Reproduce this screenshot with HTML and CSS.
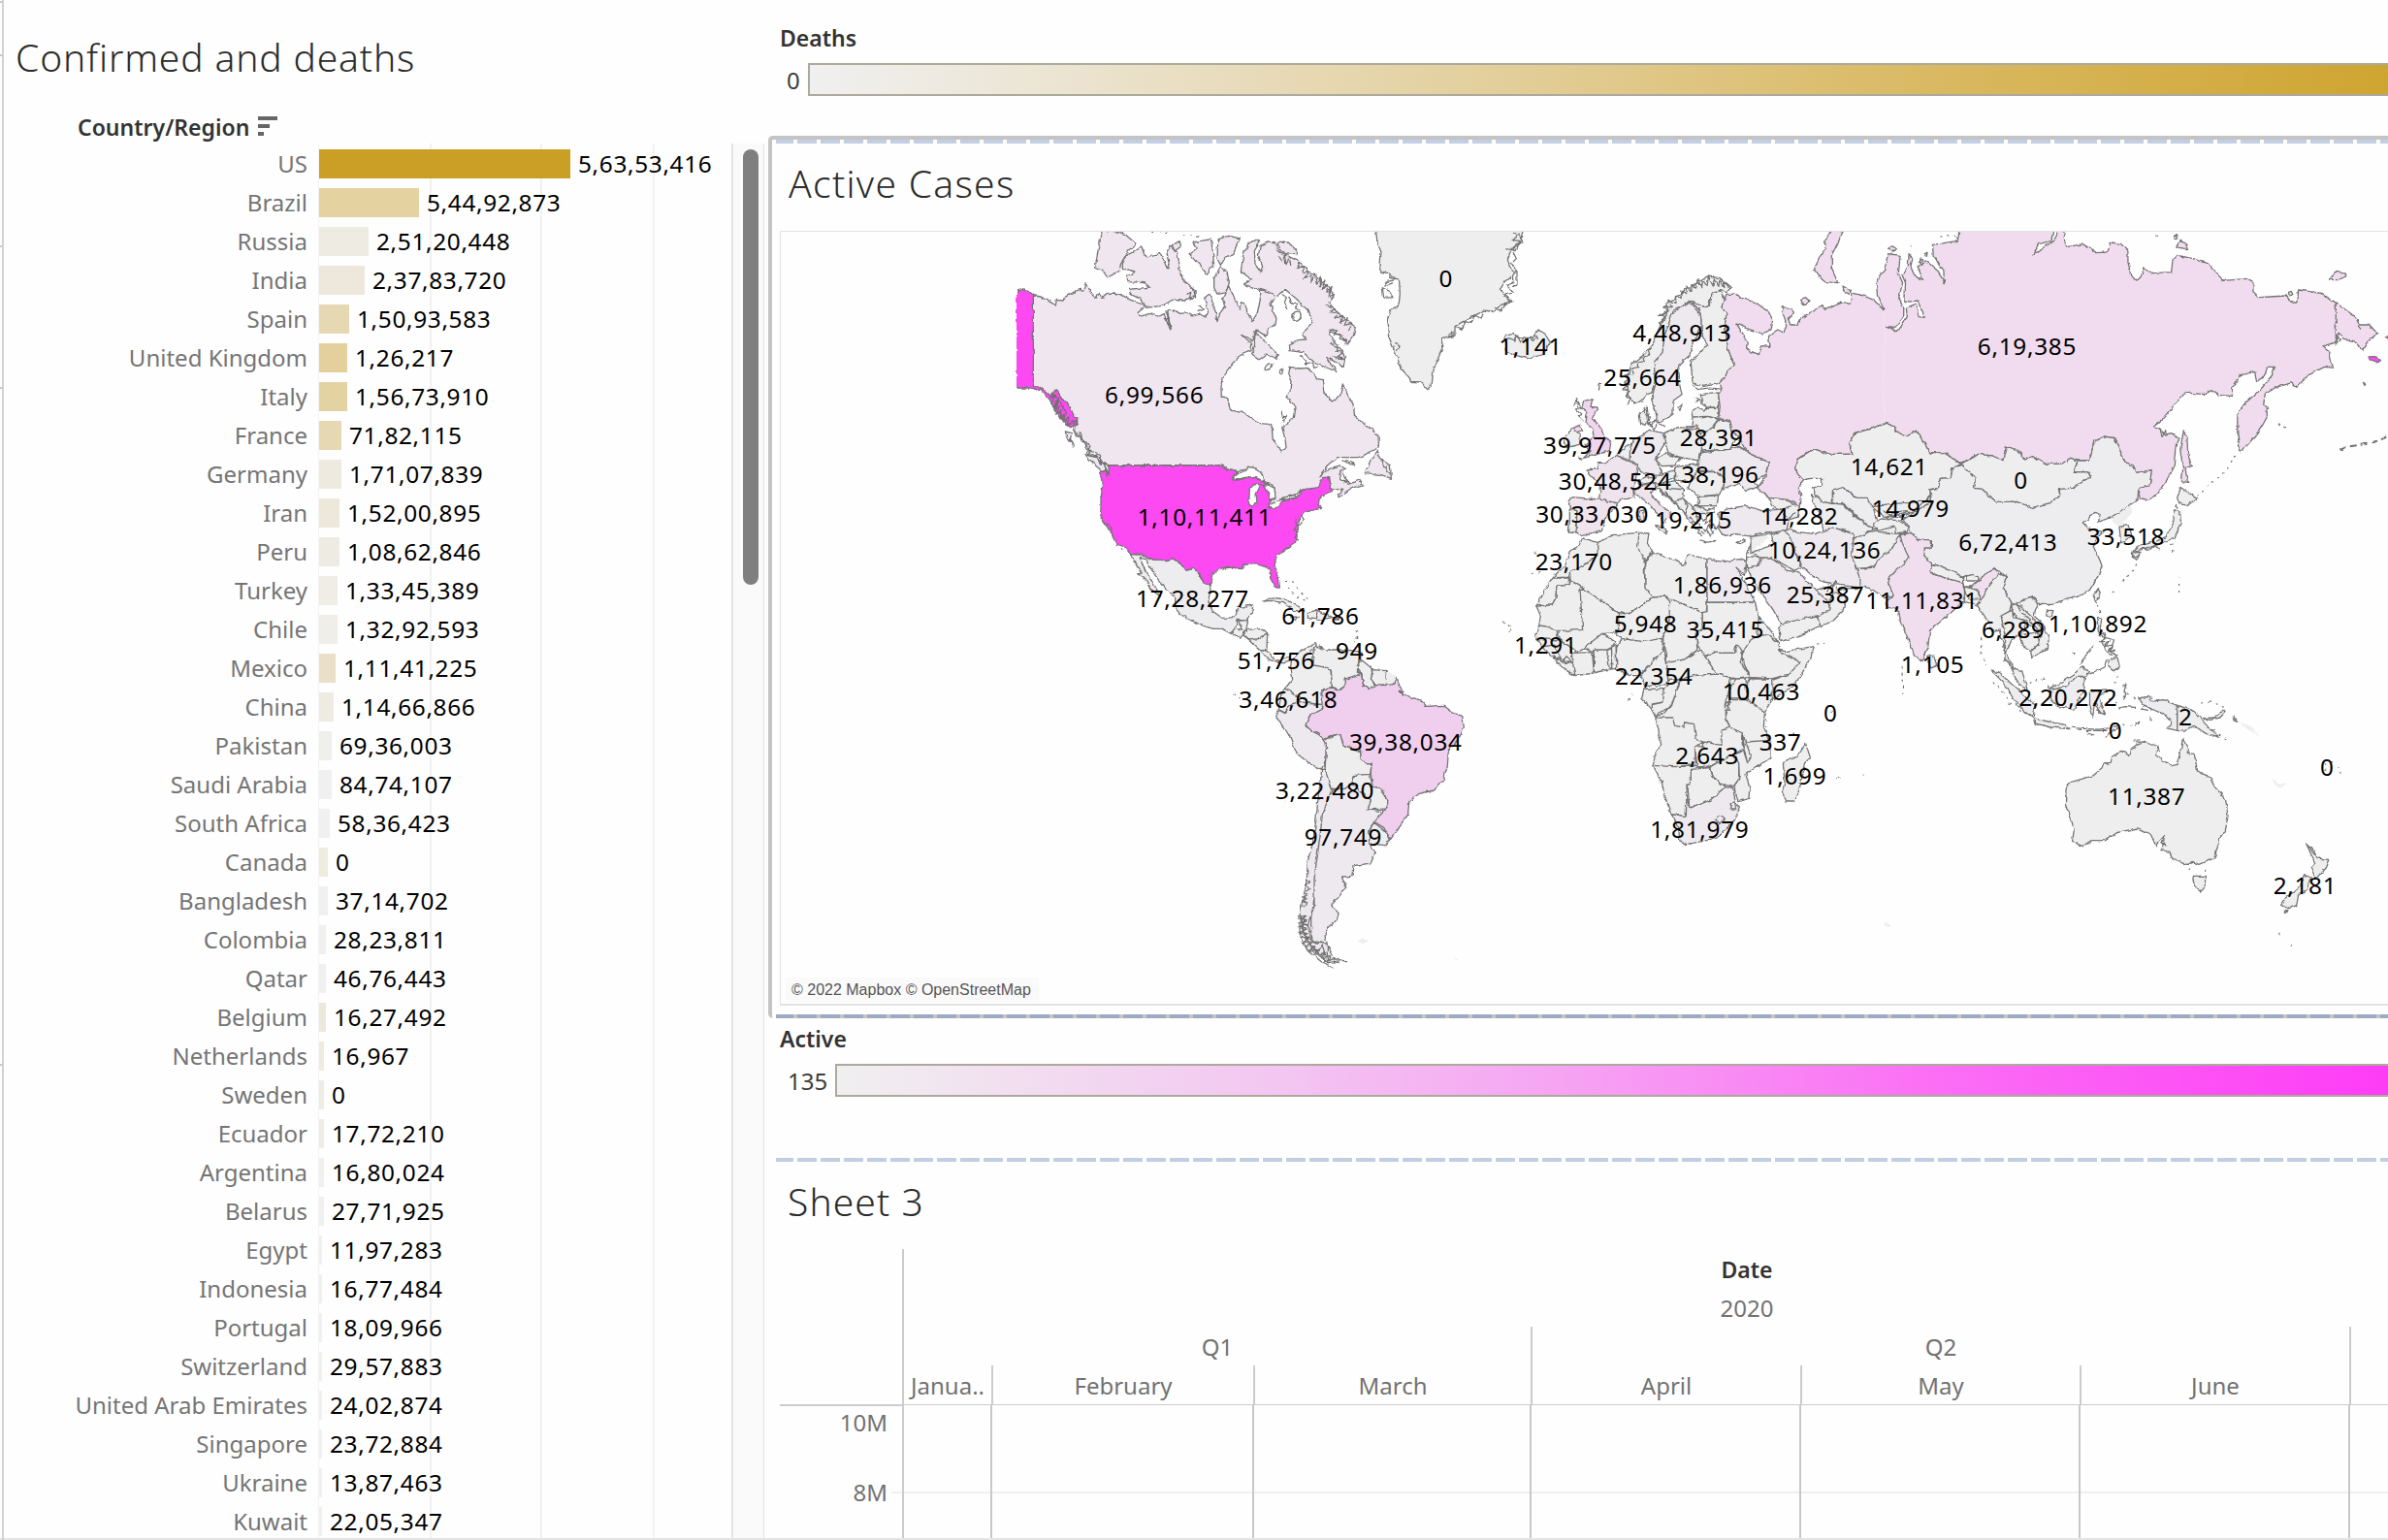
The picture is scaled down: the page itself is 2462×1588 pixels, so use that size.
FILE: index.html
```html
<!DOCTYPE html>
<html lang="en">
<head>
<meta charset="utf-8">
<title>Confirmed and deaths</title>
<link rel="stylesheet" href="styles.css">
</head>
<body>
<main class="dashboard">
  <section class="sheet-bars">
    <div class="edge"><i></i><i></i><i></i><i></i><i></i></div>
    <div class="bars-body">
      <h1 class="title">Confirmed and deaths</h1>
      <div class="field-head"><span>Country/Region</span>
        <svg class="sort" width="20" height="20" viewBox="0 0 20 20"><path d="M0 0h20v4H0zM0 8h12v4H0zM0 16h6v4H0z"/></svg>
      </div>
      <div class="bars-scroll">
        <div class="rows">
          <div class="row"><span class="name">US</span><b class="bar" style="width:259px;background:#cb9f25"></b><span class="val">5,63,53,416</span></div>
          <div class="row"><span class="name">Brazil</span><b class="bar" style="width:103px;background:#e4d2a1"></b><span class="val">5,44,92,873</span></div>
          <div class="row"><span class="name">Russia</span><b class="bar" style="width:51px;background:#eeebe3"></b><span class="val">2,51,20,448</span></div>
          <div class="row"><span class="name">India</span><b class="bar" style="width:47px;background:#eee7db"></b><span class="val">2,37,83,720</span></div>
          <div class="row"><span class="name">Spain</span><b class="bar" style="width:31px;background:#e6d8b3"></b><span class="val">1,50,93,583</span></div>
          <div class="row"><span class="name">United Kingdom</span><b class="bar" style="width:29px;background:#e3d09c"></b><span class="val">1,26,217</span></div>
          <div class="row"><span class="name">Italy</span><b class="bar" style="width:29px;background:#e4d3a2"></b><span class="val">1,56,73,910</span></div>
          <div class="row"><span class="name">France</span><b class="bar" style="width:23px;background:#e6d8b3"></b><span class="val">71,82,115</span></div>
          <div class="row"><span class="name">Germany</span><b class="bar" style="width:23px;background:#eeeae0"></b><span class="val">1,71,07,839</span></div>
          <div class="row"><span class="name">Iran</span><b class="bar" style="width:21px;background:#eee8da"></b><span class="val">1,52,00,895</span></div>
          <div class="row"><span class="name">Peru</span><b class="bar" style="width:21px;background:#eeebe3"></b><span class="val">1,08,62,846</span></div>
          <div class="row"><span class="name">Turkey</span><b class="bar" style="width:19px;background:#efede5"></b><span class="val">1,33,45,389</span></div>
          <div class="row"><span class="name">Chile</span><b class="bar" style="width:19px;background:#efeee9"></b><span class="val">1,32,92,593</span></div>
          <div class="row"><span class="name">Mexico</span><b class="bar" style="width:17px;background:#eae0ca"></b><span class="val">1,11,41,225</span></div>
          <div class="row"><span class="name">China</span><b class="bar" style="width:15px;background:#eeebe3"></b><span class="val">1,14,66,866</span></div>
          <div class="row"><span class="name">Pakistan</span><b class="bar" style="width:13px;background:#efefec"></b><span class="val">69,36,003</span></div>
          <div class="row"><span class="name">Saudi Arabia</span><b class="bar" style="width:13px;background:#f0f0f0"></b><span class="val">84,74,107</span></div>
          <div class="row"><span class="name">South Africa</span><b class="bar" style="width:11px;background:#f0f0f0"></b><span class="val">58,36,423</span></div>
          <div class="row"><span class="name">Canada</span><b class="bar" style="width:9px;background:#eeebdf"></b><span class="val">0</span></div>
          <div class="row"><span class="name">Bangladesh</span><b class="bar" style="width:9px;background:#f0f0f0"></b><span class="val">37,14,702</span></div>
          <div class="row"><span class="name">Colombia</span><b class="bar" style="width:7px;background:#f0f0ee"></b><span class="val">28,23,811</span></div>
          <div class="row"><span class="name">Qatar</span><b class="bar" style="width:7px;background:#f0f0f0"></b><span class="val">46,76,443</span></div>
          <div class="row"><span class="name">Belgium</span><b class="bar" style="width:7px;background:#ede9da"></b><span class="val">16,27,492</span></div>
          <div class="row"><span class="name">Netherlands</span><b class="bar" style="width:5px;background:#eeebdf"></b><span class="val">16,967</span></div>
          <div class="row"><span class="name">Sweden</span><b class="bar" style="width:5px;background:#eeece4"></b><span class="val">0</span></div>
          <div class="row"><span class="name">Ecuador</span><b class="bar" style="width:5px;background:#eeece4"></b><span class="val">17,72,210</span></div>
          <div class="row"><span class="name">Argentina</span><b class="bar" style="width:5px;background:#f0f0f0"></b><span class="val">16,80,024</span></div>
          <div class="row"><span class="name">Belarus</span><b class="bar" style="width:5px;background:#f0f0f0"></b><span class="val">27,71,925</span></div>
          <div class="row"><span class="name">Egypt</span><b class="bar" style="width:3px;background:#f0f0ec"></b><span class="val">11,97,283</span></div>
          <div class="row"><span class="name">Indonesia</span><b class="bar" style="width:3px;background:#f0f0ec"></b><span class="val">16,77,484</span></div>
          <div class="row"><span class="name">Portugal</span><b class="bar" style="width:3px;background:#f0f0f0"></b><span class="val">18,09,966</span></div>
          <div class="row"><span class="name">Switzerland</span><b class="bar" style="width:3px;background:#f0f0ec"></b><span class="val">29,57,883</span></div>
          <div class="row"><span class="name">United Arab Emirates</span><b class="bar" style="width:3px;background:#f0f0f0"></b><span class="val">24,02,874</span></div>
          <div class="row"><span class="name">Singapore</span><b class="bar" style="width:3px;background:#f0f0f0"></b><span class="val">23,72,884</span></div>
          <div class="row"><span class="name">Ukraine</span><b class="bar" style="width:3px;background:#f0f0f0"></b><span class="val">13,87,463</span></div>
          <div class="row"><span class="name">Kuwait</span><b class="bar" style="width:3px;background:#f0f0f0"></b><span class="val">22,05,347</span></div>
        </div>
        <div class="scrollbar"><div class="thumb"></div></div>
      </div>
    </div>
  </section>

  <div class="right">
    <section class="legend legend-deaths">
      <h3>Deaths</h3>
      <div class="ramp-row"><span>0</span><div class="ramp gold"></div></div>
    </section>

    <section class="sheet-map">
      <div class="dashes"></div>
      <h2 class="title">Active Cases</h2>
      <div class="map">
        <svg class="world" viewBox="805 239 1657 796" width="1657" height="796">
          <defs>
            <filter id="coast" x="0" y="0" width="1" height="1" color-interpolation-filters="sRGB">
              <feTurbulence type="fractalNoise" baseFrequency=".15" numOctaves="3" seed="4"/>
              <feDisplacementMap in="SourceGraphic" scale="4" xChannelSelector="R" yChannelSelector="G"/>
            </filter>
          </defs>
          <g filter="url(#coast)"><rect x="805" y="239" width="1657" height="796" fill="none" stroke="none"/>
          <!-- North America -->
          <g transform="translate(1020 220) scale(.33333)">
            <g class="ca">
              <path d="M136,255L160,258 175,268 190,275 205,285 208,268 228,270 232,260 250,250 268,240 283,235 290,240 297,218 308,232 315,250 330,262 340,245 348,262 362,248 385,246 410,252 430,265 455,275 482,285 480,290 458,308 470,318 495,310 520,318 540,308 545,325 560,360 555,325 550,300 570,298 590,310 610,308 630,318 650,312 668,320 675,300 665,262 680,250 690,258 694,290 700,305 705,335 712,310 728,290 722,262 740,225 755,255 765,280 775,298 778,275 790,280 800,310 812,335 828,310 838,270 835,238 860,236 880,245 885,265 870,275 875,300 888,325 885,345 862,360 855,380 825,360 815,395 778,375 800,395 812,400 810,425 785,435 765,445 755,465 740,480 720,510 717,540 718,570 738,575 745,610 780,612 805,630 840,650 873,653 877,700 890,715 905,738 918,725 915,700 905,660 925,650 940,630 945,600 930,575 918,572 930,550 933,520 925,500 930,475 960,480 985,478 1005,495 1012,512 1030,515 1035,555 1060,582 1085,565 1093,528 1110,565 1125,590 1130,625 1155,650 1180,665 1203,690 1205,725 1180,735 1165,745 1140,755 1075,755 1045,780 1020,815 1050,790 1085,780 1100,790 1085,800 1088,820 1110,838 1145,825 1155,840 1120,850 1080,878 1075,870 1095,852 1063,855 1055,840 1052,815 1030,820 1020,848 965,855 945,870 910,880 870,905 862,912 870,895 880,880 885,860 875,840 850,833 825,820 800,790 770,797 740,790 715,775 712,779 370,779 345,770 340,745 310,735 295,710 270,680 262,665 272,655 272,635 250,622 230,590 205,555 190,570 170,550 150,545 136,535Z"/>
              <path d="M345,50L380,55 400,58 420,65 455,95 430,115 410,150 400,180 365,198 350,175 328,165 335,120 342,90Z"/>
              <path d="M412,150L425,130 470,105 485,135 500,130 530,125 550,170 558,170 548,115 560,100 580,118 590,165 598,205 640,240 625,265 600,270 565,268 540,285 485,292 470,265 435,250 433,235 500,228 480,215 430,212 425,195 450,180 412,170Z"/>
              <path d="M618,125L640,110 630,90 655,85 685,80 690,110 695,160 672,188 655,165 635,145Z"/>
              <path d="M707,80L740,70 775,78 755,125 730,135 715,160 705,140ZM695,200L715,165 735,180 742,215 730,245 705,250 695,230ZM565,95L590,90 592,105 575,118Z"/>
              <path d="M785,130L800,95 825,82 838,88 820,115 822,155 840,180 845,165 832,130 838,100 860,90 885,92 890,115 920,130 960,150 985,180 1010,190 1025,215 1050,225 1065,255 1050,275 1070,300 1100,325 1135,350 1130,375 1108,405 1090,380 1050,360 1060,390 1090,420 1100,450 1095,475 1045,445 1055,465 1075,490 1050,480 1010,465 970,430 930,425 928,405 955,392 980,390 970,372 1000,335 985,300 950,265 915,235 890,255 870,245 820,230 785,220 812,205 778,180Z"/>
              <path d="M892,92L925,90 950,115 948,128 915,125 895,110ZM822,365L850,395 880,425 895,438 885,448 860,435 835,452 812,435 820,410ZM1200,735L1210,760 1240,780 1243,820 1210,808 1162,803 1180,765ZM297,745L330,755 360,785 368,808 340,790 310,765ZM235,675L255,680 250,700 262,720 240,695Z"/>
              <path class="w" d="M852,480q5,-18 26,-15q-8,20 -24,20zM898,488q5,-12 12,0q-2,14 -10,8zM938,318q2,-18 22,-14q10,18 -8,30q-14,-2 -14,-16zM1095,765L1110,765 1130,777 1115,776Z"/>
            </g>
            <path class="scr" d="M895,130l10,20 8,-22 5,30 10,-20 4,24 M960,150l-8,20 18,-6 0,18 18,-2 -14,20 22,-10 -4,22 14,-22 6,30 12,-24 0,28 14,-20 -8,30 16,-16 -2,26 16,-18 -10,32 18,-8 M1040,285l30,10 -20,10 28,4 -8,16 24,-8 -10,20 24,-14 -10,24 24,-8 -14,24 M1058,358l20,6 -14,10 28,0 -10,14 24,4 -6,14 M1055,400l24,16 -10,10 26,4 -16,12 20,10 -40,-10 M610,250l14,-6 -6,20 20,-8 -6,-20 6,26 M650,285l14,12 -20,8 M545,300l10,26 -14,2 16,20 -6,-30 12,40 M905,250l14,10 -6,20 8,14 M925,260l14,20 14,0 -6,14 14,6 M1212,175l20,10 10,-10 -4,24 22,6 -30,6 -6,14 24,-10 M1216,230l20,10 12,20 -28,2zM1236,300l24,-6 -16,16 20,4 M960,440l20,14 0,14 20,-6 4,16 14,-4 M1092,800l8,20 18,14 -20,-8 M1215,765l4,16 12,2 -2,16 12,10"/>
            <path class="us" d="M343,795L370,800 368,780 712,780 740,793 770,798 750,820 765,822 800,815 848,828 862,840 882,870 862,912 905,892 950,880 965,856 1018,850 1030,818 1050,815 1055,845 1062,858 1035,870 1020,885 1018,905 1028,912 975,925 960,945 955,965 955,985 945,1020 915,1040 890,1060 882,1085 895,1125 898,1158 885,1158 870,1130 865,1100 850,1092 820,1085 790,1087 780,1100 750,1095 715,1098 690,1115 683,1150 665,1145 650,1115 632,1098 608,1105 590,1080 570,1068 545,1072 510,1072 465,1055 435,1053 425,1035 392,1022 375,985 350,950 345,920 345,880 350,850Z"/>
            <path class="us" d="M84,240L105,236 118,240 136,255 136,535 150,533 175,552 190,565 205,545 225,570 250,600 262,628 272,632 270,655 258,660 240,655 225,640 205,610 190,580 160,548 130,540 90,540 84,530"/>
            <path class="w" d="M750,822L770,805 795,795 800,783 830,790 845,810 848,828 825,818 800,815 780,820ZM805,850L822,838 836,840 822,870 825,890 815,908 803,900ZM838,838L862,840 882,850 885,880 870,885 860,865 855,845ZM862,910L885,890 915,885 905,895 880,912ZM905,880L945,872 950,878 920,885Z"/>
            <path class="scr" d="M190,570l10,-10 -6,26 14,-6 -8,24 16,-8 -10,26 18,-14 -6,28 16,-16 -6,26 18,-18 -4,30 16,-20 2,22 8,-20 6,14 M200,560l40,60 M215,570l-10,30 40,50 M265,670l6,20 16,0 -6,16 20,2 -4,20 18,6 -8,14 24,6 8,14 18,8 0,16 16,16 M278,676l10,24 24,20 -10,20 40,14 20,44 6,20 M300,740l30,10 14,26 M945,945l6,20 -8,14 10,8 -8,12 10,10 M962,930l14,16 -18,20 M362,960l14,8 2,16 M903,610l4,22 10,-8 -6,18 -8,-8 8,-8"/>
            <path class="g2" d="M435,1055L465,1056 510,1072 548,1073 570,1068 592,1082 610,1106 632,1098 650,1118 665,1147 685,1152 678,1200 690,1230 720,1252 760,1250 770,1220 815,1212 812,1235 798,1255 797,1260 765,1258 762,1285 748,1300 720,1285 690,1285 640,1268 590,1240 575,1220 575,1190 545,1160 520,1130 500,1100 485,1070 466,1066 480,1100 510,1150 530,1185 500,1165 480,1130 458,1115 470,1115 455,1085Z"/>
            <path class="g" d="M748,1300L762,1285 785,1287 765,1262 800,1258 795,1285 785,1305 775,1312ZM785,1305L800,1288 845,1285 860,1298 835,1315 805,1320ZM805,1320L835,1315 860,1298 858,1348 838,1350ZM845,1200L875,1188 920,1195 955,1215 975,1230 940,1228 910,1205 870,1198ZM985,1235L1010,1228 1045,1240 1060,1250 1020,1258 985,1252ZM1010,1230V1256M930,1250L955,1248 950,1258Z"/>
            <path class="scr dot" d="M915,1138L940,1140 945,1155M925,1155L940,1180 960,1190 985,1200M950,1160L975,1185 990,1195M1135,1290L1142,1330M392,1025L420,1050M550,58L490,58M600,68L660,70"/>
            <path class="us" d="M1064,1251h18v6h-18z"/>
            <path class="g" d="M1195,50L1200,90 1212,120 1208,180 1235,185 1268,210 1270,250 1265,290 1240,300 1230,335 1235,380 1255,430 1275,480 1305,520 1335,522 1355,545 1368,530 1375,480 1400,420 1400,385 1440,378 1440,350 1490,320 1530,300 1560,305 1580,286 1613,273 1580,235 1595,210 1622,188 1603,141 1615,110 1641,94 1651,50"/>
            <path class="scr" d="M1440,350l20,10 10,-26 20,6 10,-24 20,10 10,-20 M1560,290l20,10 20,-24 20,-4 -30,-20 30,-6 -20,-24 20,-6 -2,-26 14,-10 -20,-30 M1600,110l30,6 10,-30 -20,-4 20,-20 M1255,400l14,10 -8,16 M1420,380l14,-14 0,20"/>
          </g>
          <!-- South America -->
          <g transform="translate(1240 560) scale(.33333)">
            <path class="g" d="M175,328L197,332 215,355 240,365 262,350 275,365 250,372 235,368 205,362ZM275,365L300,335 350,312 352,322 330,335 345,355 340,378 372,382 395,390 400,430 398,450 368,452 372,500 330,495 290,470 255,450 278,420 272,380ZM350,320L370,330 360,318 385,330 440,330 480,335 495,345 478,380 485,405 440,420 442,440 420,455 400,448 397,390 370,382 342,378 338,350ZM492,362L520,385 525,405 520,420 530,445 510,452 495,435 492,405 478,400 480,380ZM525,392L568,395 565,437 535,440 520,420ZM255,450L290,470 295,490 270,500 255,525 235,515 240,480 245,460ZM372,608L425,590 435,625 488,645 490,672 522,685 518,715 470,718 462,745 440,760 400,760 390,740 378,700 380,670 383,630ZM470,718L518,715 525,752 548,758 560,778 572,800 565,822 510,825 520,795 465,760 462,740ZM530,865L575,900 578,918 565,935 515,930 515,895Z"/>
            <path class="g n" d="M568,395L600,412 588,435 565,437Z"/>
            <path class="br" d="M600,415L612,450 620,465 640,475 685,490 690,505 745,502 775,525 803,535 808,570 790,610 760,640 757,690 745,730 728,752 715,765 670,775 638,800 635,840 605,880 580,915 560,880 530,862 560,830 573,805 560,770 545,755 525,755 520,715 522,685 490,672 488,640 435,625 425,590 400,595 372,608 358,590 330,580 318,560 330,535 368,510 372,455 400,450 420,455 440,445 438,420 480,412 490,405 497,440 515,452 535,440 565,440 588,437Z"/>
            <path class="pe" d="M228,525L238,518 255,527 270,500 300,490 330,497 368,500 368,515 330,535 318,562 330,580 358,590 372,608 382,625 380,670 368,700 335,685 290,650 270,600 245,560 228,540ZM368,700L380,700 390,740 398,765 385,800 370,840 365,890 357,950 350,1000 345,1040 345,1100 335,1160 335,1200 340,1235 385,1240 385,1295 340,1260 310,1200 300,1150 310,1100 322,1040 325,980 340,930 350,860 358,780 365,730ZM398,765L440,760 462,745 520,795 510,825 560,830 530,862 515,890 515,930 533,960 520,990 465,998 462,1030 430,1032 440,1060 425,1090 398,1120 420,1145 415,1165 390,1190 378,1215 385,1240 335,1230 325,1180 345,1120 345,1040 355,960 365,890 370,840 385,800ZM385,1245L405,1280 430,1292 385,1298Z"/>
            <path class="scr" d="M318,1040l14,10 -16,8 18,10 -16,10 M310,1080l14,6 -16,8 18,8 -18,6 18,8 -16,8 M298,1150l22,4 -24,8 26,4 -26,10 28,4 -26,10 24,4 -22,10 24,4 -22,10 28,4 -20,12 28,2 -20,12 30,0 -20,12 30,-2 -10,14 30,-4 -10,16 26,-8 -6,16 20,-10 0,14 14,2 M300,1155v50l20,50 50,40 35,20 M310,1150v50l20,40 60,60 M345,1245l10,20 15,-20 10,30 -20,-6 M428,1292h16 M605,460l16,0 2,10 M430,1050l16,4 -6,10"/>
            <path class="g n" d="M478,1230L498,1224 518,1228 495,1240ZM775,1275L792,1290 785,1290Z"/>
            <path class="scr dot" d="M95,465L115,480M475,270L480,320M930,245L960,265 940,278M470,300L495,345"/>
          </g>
          <!-- Europe -->
          <g transform="translate(1560 220) scale(.33333)">
            <path class="g" d="M-25,375L0,370 15,385 60,385 78,360 98,372 115,400 95,435 50,450 10,440 -20,425Z"/>
            <path class="g" d="M675,228L640,200 600,195 570,215 530,235 500,265 470,280 480,300 465,325 445,370 430,410 400,440 365,470 355,500 355,560 375,588 400,578 415,560 428,555 440,530 436,460 465,430 468,380 490,320 495,300 520,290 550,270 580,290 605,285 615,250 640,238 660,245Z"/>
            <path class="se" d="M436,460L462,430 468,380 492,310 520,290 548,275 580,310 583,345 570,380 555,400 550,435 512,470 515,530 522,560 495,580 495,620 480,632 448,648 440,610 428,575 440,530Z"/>
            <path class="g" d="M550,270L585,288 610,285 615,248 640,240 655,265 645,290 660,310 655,345 665,420 682,465 640,525 590,535 555,525 550,460 600,405 583,380 582,330 578,300ZM390,620L415,600 418,640 405,655 395,650ZM580,560L636,552 635,600 600,600 585,590ZM552,612L570,600 590,612 600,600 635,602 637,635 600,628 555,630ZM555,630L600,628 637,637 620,660 600,675 570,670 552,655Z"/>
            <path class="scr" d="M670,230l-20,-20 4,20 -16,-24 -2,20 -14,-24 -4,22 -14,-28 -4,30 -14,-20 -2,24 -14,-24 -4,26 -14,-12 0,22 -18,-18 2,24 -18,-8 2,22 -18,-6 2,22 -22,-10 8,22 -26,0 14,12 -30,14 30,0 M480,300l-20,14 12,8 -20,18 10,10 -18,20 M430,410l-12,14 4,14 -20,6 4,14 -22,4 2,14 -20,4 4,16 -22,4 10,12 -14,10 16,8 -18,12 18,8 -14,14 16,10 -8,20 M405,600l6,20 10,10 -6,20 12,10 12,-20 -20,10 20,20 6,-24 -10,-10 M450,650l20,10 M510,600l12,-10 -6,20zM560,570l20,6 -14,10 M555,530l20,14 30,-4 50,4 M200,600l-4,-20 14,20 -14,6 18,16 -12,6 16,16 M265,545l4,-20 4,6 M690,250l8,6 M-15,385l20,8 10,-12 8,18 12,-16 6,16 14,-18 6,14 12,-16 4,14 M0,60l20,10 10,20 -20,4 -10,20 M0,120l10,20 -10,10 M0,180h12v44H0"/>
            <path class="ru" d="M1147,300L1115,268 1085,255 1050,247 1045,280 1020,275 985,290 965,298 955,285 930,300 905,315 885,330 878,345 858,345 850,325 870,310 862,295 830,290 838,320 845,345 838,368 818,360 790,380 795,412 770,410 760,437 740,430 722,415 725,395 690,340 720,355 770,372 798,360 803,330 790,305 750,275 705,262 690,250 660,250 645,290 660,310 655,345 665,420 682,465 640,525 645,545 635,560 640,600 635,635 670,640 675,670 695,690 715,725 735,745 790,770 780,815 755,850 790,880 840,885 870,895 885,910 890,870 880,850 900,825 885,815 872,785 880,760 930,728 975,745 1050,745 1042,720 1060,700 1052,680 1110,665 1147,652"/>
            <path class="ru" d="M985,50L1020,57 1005,90 985,130 985,170 1005,215 965,212 945,195 932,175 945,140 965,110 965,85ZM890,265L905,260 915,270 900,285ZM1020,225L1045,240 1040,250 1022,240ZM535,660L570,658 568,672 540,670Z"/>
            <path class="uk" d="M220,580L245,575 240,598 262,600 245,630 268,660 285,695 303,705 298,735 260,745 218,757 240,735 225,715 250,690 245,665 225,650 228,620 212,600ZM185,665L205,655 215,670 195,678Z"/>
            <path class="g" d="M160,690L185,665 200,678 208,690 205,715 165,725 160,705ZM468,680L510,662 575,668 585,720 575,765 520,755 480,740 470,710ZM620,660L640,638 672,645 678,675 695,690 670,730 585,735 580,680 600,675ZM318,748L340,730 365,710 362,765ZM175,915L198,920 192,985 172,988 175,950ZM385,830L410,815 440,820 450,810 500,795 498,820 460,835 430,832 390,840ZM440,760L470,742 520,758 500,780 460,782ZM500,785L575,775 570,800 545,830 500,825ZM570,800L630,800 655,825 640,870 580,875 540,850ZM572,878L635,872 630,905 575,905Z"/>
            <path class="pe" d="M395,690L420,670 465,680 470,710 440,760 460,800 445,810 395,800 385,780 360,765 362,730 372,700ZM585,740L670,730 700,720 735,745 790,770 780,810 745,830 760,845 720,860 700,835 675,845 650,855 655,820 630,800 575,795 570,770ZM635,930L660,915 720,905 770,920 830,915 855,950 845,980 800,988 760,990 740,1000 690,992 650,998 635,975 640,950Z"/>
            <path class="fr" d="M228,795L265,790 262,770 290,770 318,748 340,760 385,780 378,830 370,850 375,880 335,885 325,897 265,885 272,845 235,805ZM172,885L185,878 265,885 325,897 285,940 275,980 240,990 210,998 195,985 198,920 175,915ZM372,860L400,840 440,835 440,855 425,860 440,890 480,920 490,940 475,945 465,960 450,930 415,895 385,870ZM440,965L470,970 475,990 450,980ZM390,920L405,918 405,950 393,950Z"/>
            <path class="g" d="M440,845L500,830 530,855 525,880 550,905 575,905 600,920 620,910 625,925 570,930 570,960 555,965 530,930 500,890 460,865ZM485,850L530,855 M500,890L525,880 540,905 530,930 M550,905L570,930 M790,880L840,885 885,910 880,940 850,950 830,915 800,905ZM830,915L860,905M850,950L870,925"/>
            <path class="scr" d="M450,850l20,20 10,6 20,24 M470,860l20,30 30,20 M545,940l20,20 -10,10 22,10 -6,10 14,8 M570,935l16,14 14,-12 -6,22 16,-8 -4,20 14,-10 8,16 8,-14 M580,985l12,10 M600,980l10,16 12,-14 M580,1010q20,14 45,2 M690,1018l14,4 14,-8 -6,-4zM575,960l20,24 10,-18 14,24 M200,570l-12,26 M215,760l-14,-4"/>
            <path class="g2" d="M925,870L970,895 1020,900 1060,940 1115,975 1060,1010 1040,985 1000,975 960,985 950,930 930,900ZM988,855L1020,845 1060,880 1105,880 1150,900 1115,915 1130,975 1115,978 1060,935 1020,895 990,898Z"/>
          </g>
          <!-- Africa and the Middle East -->
          <g transform="translate(1560 520) scale(.33333)">
            <path class="g" d="M215,105L262,118 265,150 215,190 175,210 175,225 120,228 160,190 175,145 205,128ZM120,228L175,228 175,248 135,250 132,290 120,312 72,315 95,270ZM262,118L310,95 390,88 385,135 405,165 408,260 435,288 355,340 325,335 178,235 175,210 215,190 265,155ZM390,88L420,90 415,120 432,150 408,170 385,135ZM432,150L480,165 530,188 540,155 600,170 600,305 598,332 585,335 470,285 435,288 408,260 408,175ZM600,303L748,303 760,350 790,400 760,405 735,420 710,460 690,435 685,460 620,460 592,470 570,435 565,400 585,385 585,335 600,332Z"/>
            <path class="pe" d="M600,170L650,178 700,170 722,180 715,220 690,195 720,245 748,303 600,303Z"/>
            <path class="g" d="M72,315L120,312 132,290 135,250 175,248 178,235 220,262 207,262 215,388 140,392 105,378 80,375 85,345ZM207,262L220,262 325,335 328,385 320,398 275,400 220,445 195,458 180,445 140,420 135,392 215,388ZM325,335L355,340 435,288 470,285 485,300 482,370 460,415 400,425 335,415 315,395 328,385ZM470,285L585,335 585,385 565,400 570,450 530,480 475,490 465,440 460,410 482,370 485,300ZM80,375L105,378 140,392 145,420 180,445 185,490 160,490 120,470 90,440 68,405ZM75,415L140,420M95,440L125,435 150,480M150,490L165,470 180,490M120,470L150,480 185,495 192,530 150,505ZM185,460L245,458 250,522 192,530 185,495ZM220,445L275,400 315,425 300,450 250,450 245,458ZM250,450L290,450 298,510 250,522ZM290,450L318,435 320,508 298,510ZM305,445V508M335,415L400,425 460,415 465,455 440,475 415,505 390,530 360,530 320,508 320,440ZM460,415L475,460 475,490 480,560 410,562 395,530 440,475 465,455ZM475,490L530,480 580,450 630,525 560,530 520,540 480,545ZM592,470L620,460 685,460 695,435 710,460 715,495 735,535 690,540 630,525ZM735,420L760,405 790,405 820,430 830,460 888,487 855,525 800,540 735,535 705,490 715,450ZM820,450L845,455 928,440 920,480 870,560 805,605 800,545 855,525 888,487 835,465ZM760,350L790,380 822,430 790,405 755,405ZM730,540L800,540 802,600 778,645 725,605 720,560ZM670,540L720,540 725,600 670,600 665,570ZM670,605L725,605 778,645 775,690 795,730 720,735 710,708 670,690 655,655ZM655,620L670,610 668,635 655,640ZM520,540L560,530 630,525 690,540 670,570 655,620 655,655 672,690 645,700 645,745 590,735 565,728 560,680 530,675 528,690 500,685 493,660 440,660 450,645 490,625 505,580ZM405,570L465,572 465,612 430,620 430,635 398,600ZM430,635L430,618 465,612 465,572 480,560 515,540 505,580 490,620 465,648 440,655ZM440,660L493,660 500,685 528,690 530,675 560,680 565,728 590,735 562,750 565,805 500,812 433,808 440,770 458,745 450,700ZM590,735L645,745 645,700 672,690 710,708 715,755 680,775 630,800 600,815 570,815 562,750 588,750ZM708,710L720,735 735,785 725,800 715,770ZM720,735L795,730 795,785 720,835 732,880 728,910 695,920 685,880 700,840 698,800 680,775 715,760 725,800 735,785ZM605,815L640,795 680,775 698,800 698,850 680,875 640,865 615,835ZM550,820L605,815 615,840 655,875 610,915 575,930 545,935 540,870 550,870ZM433,808L500,812 550,810 610,815 550,820 550,870 537,870 535,965 490,960 468,900 460,860ZM905,740L918,780 905,800 880,900 870,918 845,918 832,890 840,860 835,800 880,780Z"/>
            <path class="pe" d="M490,960L535,965 537,900 545,937 575,930 610,915 655,875 680,877 688,925 700,935 690,970 640,1025 600,1040 535,1052 515,1040 512,1000ZM840,85L855,75 880,85 935,92 990,72 1052,92 1050,150 1060,200 1078,235 1075,258 1010,250 960,240 930,225 890,190 875,150 860,110ZM725,200L762,185 775,160 800,165 850,205 885,210 910,240 935,265 975,300 980,330 945,345 890,360 830,370 800,320 770,280 745,240Z"/>
            <path class="g" d="M625,975L640,963 655,975 640,988ZM672,930l12,-10 6,22 -14,0zM735,100L800,92 840,82 862,110 875,160 890,195 870,205 800,165 765,165 735,150ZM735,150L805,125 800,92M722,160L765,165 755,190 725,200ZM735,120L722,160 722,200M830,370L890,355 940,345 950,375 900,400 828,425 822,390ZM940,345L980,330 985,290 995,270 1030,290 1020,330 985,365 950,378ZM935,265L990,250 985,290 975,300Z"/>
            <path class="scr" d="M970,268L1000,235 1000,260M1000,265q20,-6 75,-6"/>
            <path class="scr dot" d="M55,215L95,210M65,150L85,155M355,605L375,580M780,645L785,690M1003,847h6M940,432L968,430M865,708L870,710M985,640h4"/>
          </g>
          <!-- Northern Asia -->
          <g transform="translate(1900 220) scale(.35842 .33333)">
            <path class="ru" d="M118,652L125,650 150,660 150,672 180,690 212,672 250,740 290,740 340,775 390,745 430,750 460,765 470,720 510,740 520,760 545,752 580,775 630,775 655,757 675,765 710,765 722,705 750,690 780,695 800,740 812,770 835,780 845,802 888,795 882,840 850,855 855,885 880,890 905,865 935,820 955,780 960,720 968,695 945,680 930,685 915,672 895,660 920,635 955,590 985,555 1040,560 1060,548 1080,562 1120,565 1120,540 1145,500 1185,490 1190,520 1215,500 1220,475 1243,475 1230,510 1205,540 1150,595 1135,625 1135,680 1143,740 1165,715 1185,690 1205,660 1220,630 1220,600 1210,590 1215,555 1240,540 1290,525 1305,538 1340,500 1385,475 1410,478 1400,430 1380,412 1415,400 1430,370 1440,388 1470,395 1495,422 1510,395 1537,372 1515,345 1485,345 1475,320 1420,278 1375,247 1310,237 1308,280 1285,268 1275,255 1230,258 1195,260 1180,245 1180,215 1160,202 1095,208 1065,175 1050,155 1000,138 962,130 948,150 945,182 890,185 865,170 858,195 845,210 828,190 820,150 820,115 800,95 770,90 760,120 730,122 705,105 690,95 640,105 635,50 620,50 608,85 570,110 547,130 562,95 600,85 605,50 335,50 330,85 258,97 260,130 290,180 292,215 275,180 240,148 215,165 230,205 205,190 195,165 200,140 190,125 188,160 170,190 180,215 178,275 215,270 235,322 218,320 210,280 182,292 185,320 158,365 125,352 150,355 175,320 175,290 160,265 172,215 160,185 165,130 130,125 118,180 98,205 102,255 118,300"/>
            <path class="ru" d="M1418,278V400M980,675L990,690 992,740 1003,782 985,790 992,832 975,830 978,790 970,730ZM133,110L140,100 152,108 145,118ZM1402,205L1415,182 1440,182 1447,195 1425,206ZM960,105L968,85 985,92 992,110ZM953,70l8,-6 2,12 -8,2zM215,150l8,-10 8,6 -8,8zM235,125l8,-4 -2,12zM1280,245l10,-4 4,10 -10,4z"/>
            <path class="g" d="M-42,745L25,745 20,710 35,680 85,665 125,650 150,660 150,672 180,690 212,672 250,740 290,740 340,775 315,790 310,818 280,820 275,850 250,855 255,890 150,900 80,905 70,880 40,880 0,845 -30,855 -30,898 -65,890 -88,850 -60,840 -60,820 -93,820 -112,825 -126,815 -138,785 -130,760 -84,728ZM340,778L390,745 430,750 460,765 470,720 510,740 520,760 545,752 580,775 630,775 655,757 675,765 665,800 705,800 715,820 700,820 660,850 620,855 625,870 600,895 545,912 500,895 440,892 400,853 378,850 380,820Z"/>
            <path class="g" d="M80,905L150,898 250,890 255,870 200,925 120,940ZM85,960L110,945 160,950 190,970 185,985 150,990 105,985ZM30,1010L75,985 110,980 150,968 155,990 190,990 165,1005 140,1040 100,1075 90,1095 40,1100 25,1060 30,1030Z"/>
            <path class="pk" d="M165,990L175,1025 190,1060 170,1100 130,1130 145,1180 120,1190 80,1160 50,1155 50,1135 40,1100 90,1095 100,1075 140,1040Z"/>
            <path class="cn" d="M340,778L380,820 378,850 400,853 440,892 500,892 545,910 600,895 625,870 620,853 660,850 700,820 715,818 705,800 665,800 675,765 710,765 722,705 750,690 780,695 800,740 812,770 835,780 845,802 888,795 882,840 850,855 848,885 810,915 770,940 735,955 740,930 725,925 690,960 705,975 750,985 735,1000 720,1030 740,1075 745,1090 735,1120 710,1165 680,1185 640,1195 600,1210 570,1210 545,1188 520,1195 500,1210 485,1205 460,1155 470,1125 455,1110 435,1100 392,1135 355,1120 345,1125 270,1085 250,1085 235,1060 235,1035 255,1030 250,1010 220,1010 195,988 190,965 170,950 255,890 250,855 275,850 280,820 310,818 315,790Z"/>
            <path class="g n" d="M770,945L830,900 835,925 805,955 815,965 790,970Z"/>
            <path class="g" d="M972,848L995,865 1020,880 990,905 965,895 960,885ZM955,915L970,925 972,955 955,1005 905,1025 860,1040 835,1045 850,1030 900,1015 930,1000 950,960ZM835,1050L855,1048 845,1075 832,1065ZM795,970L820,965 828,1000 800,1020Z"/>
            <path class="scr" d="M115,920l30,20 10,-14 10,14 20,-20 -40,4 -20,18 40,-2 30,-14 M912,668l6,20 10,-14 4,14 M1420,380l10,10 -14,16 M862,1036l14,6 20,-12 16,8 M830,1046l10,20 14,-10 M1480,345l10,14 M955,900l8,14"/>
            <path class="scr dot" d="M1130,750L1100,800 1065,830 1020,872M845,1085L830,1110 800,1145M780,1168L760,1172M1250,650L1275,665M900,68L908,80M280,72L325,70M195,100L215,110M945,1020L950,1060M967,1125L967,1170"/>
            <path class="scr dot2" d="M1430,732L1450,722 1500,715 1540,703 1568,690"/>
            <path class="us" d="M1512,444L1530,443 1547,455 1540,461 1515,452ZM1558,385L1575,378 1575,395ZM1497,526l6,4 -4,2z"/>
          </g>
          <!-- Southern Asia and Oceania -->
          <g transform="translate(1900 540) scale(.35842 .33333)">
            <path class="in" d="M165,35L195,28 220,50 255,50 255,75 235,75 235,100 255,125 255,155 300,170 345,182 350,195 370,195 392,175 410,155 435,142 450,155 420,190 405,240 395,240 390,205 355,195 350,240 325,262 290,295 250,330 245,380 225,425 205,405 180,340 165,300 160,262 130,260 125,240 145,220 130,185 135,165 190,105 172,65Z"/>
            <path class="g" d="M255,130L270,125 345,165 345,182 300,170 252,152ZM355,162L375,157 390,165 390,177 355,177ZM350,195L388,205 395,240 385,255 350,240ZM450,155L470,165 460,195 485,245 480,270 455,285 465,340 468,400 450,330 430,335 410,290 385,250 405,225 420,190ZM245,405L262,410 270,440 255,450 245,430ZM485,250L510,255 545,290 575,330 560,340 530,300 490,290ZM500,245L540,230 565,245 555,265 550,285 575,310 592,350 590,385 545,415 540,395 565,375 570,340 540,300 510,270ZM510,345L560,335 565,370 540,395 520,380ZM455,285L485,268 500,290 520,300 525,330 500,345 485,360 470,400 480,430 495,445 488,447 465,420 468,350 460,310ZM485,445L515,455 525,490 530,515 510,500 495,475ZM735,200L740,210 728,243 718,225ZM587,270L605,272 600,290 585,285ZM730,290L745,290 740,325 760,350 735,335ZM765,420L790,415 795,440 780,455 765,440Z"/>
            <path class="g2" d="M428,455L450,462 490,500 520,530 552,560 548,600 520,580 490,540 460,490ZM548,602L590,612 640,622 650,635 600,630 552,618ZM595,510L630,490 665,465 690,440 710,458 695,475 695,510 680,545 665,575 620,565 600,545ZM600,510L640,505 670,475 695,475M710,520L760,515 735,535 755,590 735,580 725,550 718,600 710,570ZM850,540L880,535 885,550 920,545 962,562 962,640 930,632 945,615 925,590 890,575 865,560Z"/>
            <path class="g" d="M962,562L1010,580 1035,610 1060,640 1082,660 1045,650 1010,625 980,643 962,640ZM1035,602L1070,600 1095,575 1100,582 1085,600 1055,607ZM1122,592l14,20 -8,-2z"/>
            <path class="g" d="M978,662L985,680 995,710 1010,712 1020,765 1055,785 1070,815 1100,850 1108,905 1100,950 1085,975 1068,1035 1025,1055 1005,1045 990,1055 950,1040 940,1015 915,1010 925,995 915,990 925,965 900,995 885,960 850,942 790,955 755,980 715,980 690,998 660,985 665,950 655,905 640,870 642,820 655,800 720,780 745,755 750,740 770,740 775,720 800,703 825,718 830,700 845,685 870,675 910,690 898,715 945,750 960,745 970,710ZM1005,1090L1045,1090 1045,1115 1028,1137 1012,1125ZM1332,988L1350,1005 1365,1035 1400,1040 1390,1065 1370,1090 1360,1095 1345,1065 1358,1050ZM1330,1085L1345,1095 1335,1130 1310,1150 1305,1180 1285,1192 1260,1180 1275,1155 1310,1130ZM1270,1196h10l-6,6z"/>
            <path class="scr" d="M735,345l20,10 -14,10 24,0 -10,14 22,-4 -14,16 20,0 -16,14 24,2 M750,350l30,10 -10,30 16,20 M745,360l12,34 20,14 M720,375l-40,62 M700,470l20,-10 30,-16 10,-24 M655,630l30,4 50,2 40,-4 20,-6 M700,640l60,0 M706,648l20,6 M755,662l12,-16 26,-14 M805,505l10,-8 -6,20 8,8 -10,16 M790,570l20,-4 30,2 M840,628l16,-16 M745,555l-10,30 18,6 M870,562l-12,10 20,6 M885,598v14 M835,672l20,0 M845,678l30,-6 M905,690l6,16 M920,980l10,16 -14,-6 16,4 M755,740l10,6 M590,500l10,20 M1335,992l20,30 6,2 M345,190l10,30 14,14 20,0"/>
            <path class="scr dot" d="M398,355L398,400 412,440M432,488L460,520 485,565M535,490L580,480M735,250L740,290M820,525L850,545M885,540L910,545M765,545L800,560M805,625L850,620M1030,555L1065,550M1055,548L1100,570M1065,640L1110,670M995,1070l6,4M1045,1070v10M1255,1265v8M1290,1303v4M1385,745L1415,735M1425,750L1435,790M170,440L172,535M790,470L780,510M1385,760l14,-4M56,778h4M480,520L515,595M660,400h6"/>
            <path class="g n" d="M1138,612L1170,625 1205,660 1150,628ZM1232,788L1258,808 1278,803 1262,818 1245,808ZM120,1233l17,8v7h-17z"/>
          </g>
          </g>
          <!-- Mark labels -->
          <g class="labels" transform="scale(1.5702)">
            <text x="949.5" y="188.7">0</text><text x="758" y="265">6,99,566</text><text x="791" y="345.3">1,10,11,411</text><text x="783" y="398.7">17,28,277</text><text x="867" y="410.3">61,786</text><text x="891" y="433.3">949</text><text x="838" y="439.7">51,756</text><text x="846" y="465">3,46,618</text><text x="923" y="493.2">39,38,034</text><text x="870" y="524.7">3,22,480</text><text x="882" y="555.5">97,749</text>
            <text x="1005" y="233.3">1,141</text><text x="1104.5" y="224.3">4,48,913</text><text x="1078.5" y="253.5">25,664</text><text x="1050.5" y="298.3">39,97,775</text><text x="1128.5" y="293">28,391</text><text x="1060.5" y="321.3">30,48,524</text><text x="1129.5" y="317.3">38,196</text><text x="1045.5" y="343">30,33,030</text><text x="1112" y="347">19,215</text><text x="1181.5" y="344.3">14,282</text><text x="1240.5" y="312.3">14,621</text><text x="1254.5" y="339.3">14,979</text><text x="1198" y="367">10,24,136</text>
            <text x="1033.5" y="374.7">23,170</text><text x="1131" y="390">1,86,936</text><text x="1198.5" y="396.3">25,387</text><text x="1262" y="400">11,11,831</text><text x="1080.5" y="415.3">5,948</text><text x="1133" y="419">35,415</text><text x="1015" y="429.3">1,291</text><text x="1086" y="449.5">22,354</text><text x="1156.5" y="460">10,463</text><text x="1202" y="473.7">0</text><text x="1169" y="493.2">337</text><text x="1121" y="502">2,643</text><text x="1178.5" y="515">1,699</text><text x="1116" y="550.5">1,81,979</text>
            <text x="1331" y="233.3">6,19,385</text><text x="1327" y="321">0</text><text x="1318.5" y="362">6,72,413</text><text x="1396" y="357.7">33,518</text><text x="1377.5" y="415.3">1,10,892</text><text x="1322" y="419">6,289</text><text x="1269" y="442">1,105</text><text x="1358" y="463.7">2,20,272</text><text x="1435" y="476.5">2</text><text x="1389" y="485.3">0</text><text x="1409.5" y="528.7">11,387</text><text x="1528" y="509.5">0</text><text x="1513.5" y="587.5">2,181</text>
          </g>
        </svg>
        <div class="credit">© 2022 Mapbox © OpenStreetMap</div>
      </div>
      <div class="dashes dark"></div>
    </section>

    <section class="legend legend-active">
      <h3>Active</h3>
      <div class="ramp-row"><span>135</span><div class="ramp pink"></div></div>
    </section>

    <section class="sheet-line">
      <div class="dashes"></div>
      <h2 class="title">Sheet 3</h2>
      <div class="xtab">
        <div class="axis">
          <div class="corner"></div>
          <div class="scale"><span>10M</span><span>8M</span></div>
        </div>
        <div class="pane">
          <div class="hd field">Date</div>
          <div class="hd year">2020</div>
          <div class="quarters"><div>Q1</div><div>Q2</div><div></div></div>
          <div class="months"><div>Janua..</div><div>February</div><div>March</div><div>April</div><div>May</div><div>June</div><div></div></div>
          <div class="plot"><div></div><div></div><div></div><div></div><div></div><div></div><div></div></div>
        </div>
      </div>
    </section>
  </div>
</main>
</body>
</html>
```
FILE: styles.css
```css
* { box-sizing: border-box; margin: 0; padding: 0; }
body {
  width: 2462px; height: 1588px; overflow: hidden;
  background: #fefefe; color: #333;
  font: 24px/1 "Noto Sans", "Open Sans", sans-serif;
}
.dashboard { display: flex; width: 2462px; height: 1588px; border-bottom: 2px solid #e4e4e4; }
.title { font-size: 39px; font-weight: 300; line-height: 50px; color: #2b2b2b; white-space: nowrap; }

/* Bar sheet */
.sheet-bars { display: flex; width: 792px; flex: none; }
.edge { width: 4px; height: 1588px; border-right: 2px solid #d2d2d2; flex: none; }
.edge i { display: block; width: 2px; height: 2px; background: #c8c8c8; margin-bottom: 53px; }
.edge i:nth-child(1) { margin-top: 1px; }
.edge i:nth-child(2) { margin-bottom: 195px; }
.edge i:nth-child(3) { margin-bottom: 144px; }
.edge i:nth-child(4) { margin-bottom: 696px; }
.bars-body { flex: 1; padding-top: 34px; }
.bars-body .title { padding-left: 12px; letter-spacing: .85px; }
.field-head {
  display: flex; align-items: center; height: 24px; margin: 35px 0 5px 76px;
  font-size: 23px; font-weight: 600; line-height: 24px;
}
.field-head span { width: 177px; white-space: nowrap; }
.sort { margin: -3px 0 0 9px; fill: #666; }
.bars-scroll { display: flex; height: 1438px; overflow: hidden; }
.rows {
  width: 750px; padding-top: 1px; flex: none;
  background:
    linear-gradient(#f4f4f4, #f4f4f4) 324px 0 / 1px 100% no-repeat,
    linear-gradient(#f1f1f1, #f1f1f1) 439px 0 / 2px 100% no-repeat,
    linear-gradient(#f1f1f1, #f1f1f1) 553px 0 / 2px 100% no-repeat,
    linear-gradient(#f1f1f1, #f1f1f1) 669px 0 / 2px 100% no-repeat;
}
.row { display: flex; align-items: center; height: 40px; white-space: nowrap; }
.name { width: 313px; text-align: right; color: #757575; font-weight: 400; }
.bar { height: 30px; margin-left: 12px; }
.val { margin-left: 8px; color: #000; font-weight: 400; font-size: 24.4px; letter-spacing: .65px; }
.scrollbar { width: 34px; background: #fafafa; border: solid #e4e4e4; border-width: 0 1px 0 2px; padding: 6px 0 0 10px; }
.thumb { width: 16px; height: 449px; border-radius: 8px; background: #7f7f7f; }

/* Right column */
.right { flex: 1; width: 1670px; display: flex; flex-direction: column; overflow: hidden; }
.legend { padding-left: 12px; flex: none; }
.legend h3 { font-size: 23px; font-weight: 600; line-height: 30px; }
.legend-deaths { height: 140px; padding-top: 24px; }
.legend-active { height: 144px; padding-top: 6px; }
.ramp-row { display: flex; align-items: center; color: #3c3c3c; }
.legend-deaths .ramp-row { margin-top: 11px; padding-left: 7px; }
.legend-active .ramp-row { margin-top: 11px; padding-left: 8px; }
.ramp-row span { padding-top: 2px; }
.legend-deaths .ramp-row span { width: 22px; }
.legend-active .ramp-row span { width: 49px; }
.ramp { flex: 1; height: 34px; border: 2px solid #ada99d; border-right: 0; }
.gold { background: linear-gradient(90deg, #f0f0f0 0, #e5d4a8 37%, #dabb68 68%, #cfa531 100%); }
.pink { background: linear-gradient(90deg, #f0f0f0 0, #f2dcf0 13%, #f3c5f1 29%, #f6a1f3 48%, #fb70f5 70%, #fe3cf6 100%); }
.dashes {
  height: 4px; margin-left: 4px;
  background: repeating-linear-gradient(90deg, #c3cee3 0 20px, transparent 20px 24px) -2px 0 / 1680px 4px;
}
.dashes.dark {
  height: 4px; margin: 9px 0 0 4px;
  background: repeating-linear-gradient(90deg, #9daac2 0 20px, #c4c4c4 20px 24px) -2px 0 / 1680px 4px;
}

/* Map sheet */
.sheet-map {
  height: 910px; flex: none; border: 4px solid #c4c4c4; border-width: 4px 0 0 4px;
  border-radius: 5px 0 0 5px;
}
.sheet-map .dashes { margin-left: 4px; }
.sheet-map .title { padding-left: 17px; margin-top: 16px; letter-spacing: 1.3px; }
.map {
  position: relative; height: 799px; margin: 24px 0 0 8px;
  border: 1px solid #e2e2e2; border-width: 1px 0 2px 1px;
}
.world { display: block; }
.world path { stroke: #757575; stroke-width: 1.3px; vector-effect: non-scaling-stroke; stroke-linejoin: round; }
.world .g { fill: #eee; }
.world .g2, .world .cn { fill: #edecee; }
.world .ca { fill: #f0e6f0; }
.world .us { fill: #fc49f2; }
.world .br { fill: #f0cfee; }
.world .pe, .world .se { fill: #eee9ee; }
.world .ru { fill: #f0dcee; }
.world .uk { fill: #f0d5ee; }
.world .fr { fill: #efe3ee; }
.world .pk { fill: #efe6ee; }
.world .in { fill: #f0deef; }
.world .w { fill: #fefefe; }
.world .n { stroke: none; }
.world .scr { fill: none; stroke: #707070; stroke-width: 1.2px; }
.world .dot { stroke-dasharray: 2 5; }
.world .dot2 { stroke-dasharray: 7 4; stroke-width: 2px; }
.labels text { font-size: 15.5px; font-weight: 400; fill: #000; text-anchor: middle; letter-spacing: .45px; }
.credit {
  position: absolute; left: 5px; bottom: 2px; height: 25px; padding: 0 8px 0 6px;
  background: #fafafa; color: #555; font: 16px/26px "Liberation Sans", Arial, sans-serif;
}

/* Line sheet */
.sheet-line { flex: 1; }
.sheet-line > .dashes { margin-left: 8px; }
.sheet-line .title { padding-left: 20px; margin-top: 16px; letter-spacing: 1.1px; }
.xtab { display: flex; margin: 24px 0 0 12px; height: 298px; color: #727272; }
.axis { width: 126px; flex: none; }
.corner { height: 162px; border-bottom: 2px solid #ccc; }
.scale { height: 136px; padding: 5px 15px 0 0; text-align: right; background: linear-gradient(#efefef, #efefef) 115px 88px / 11px 2px no-repeat; }
.scale span { display: block; height: 72px; line-height: 24px; }
.pane { flex: 1; border-left: 2px solid #ccc; }
.hd { width: 1738px; text-align: center; height: 40px; line-height: 42px; }
.field { font-size: 23px; font-weight: 600; color: #333; }
.quarters, .months, .plot { display: grid; width: 1530px; }
.quarters { grid-template-columns: 648px 844px 38px; height: 40px; line-height: 42px; text-align: center; }
.months, .plot { grid-template-columns: 92px 270px 286px 278px 288px 278px 38px; }
.months { height: 41px; line-height: 42px; text-align: center; border-bottom: 1px solid #ccc; }
.quarters div, .months div { border-right: 2px solid #ccc; overflow: hidden; }
.plot { height: 137px; background: linear-gradient(#efefef, #efefef) 0 89px / 100% 2px no-repeat; }
.plot div { border-right: 2px solid #c8c8c8; margin: 0 1px 0 -1px; }
.quarters div:last-child, .months div:last-child, .plot div:last-child { border-right: 0; }
```
